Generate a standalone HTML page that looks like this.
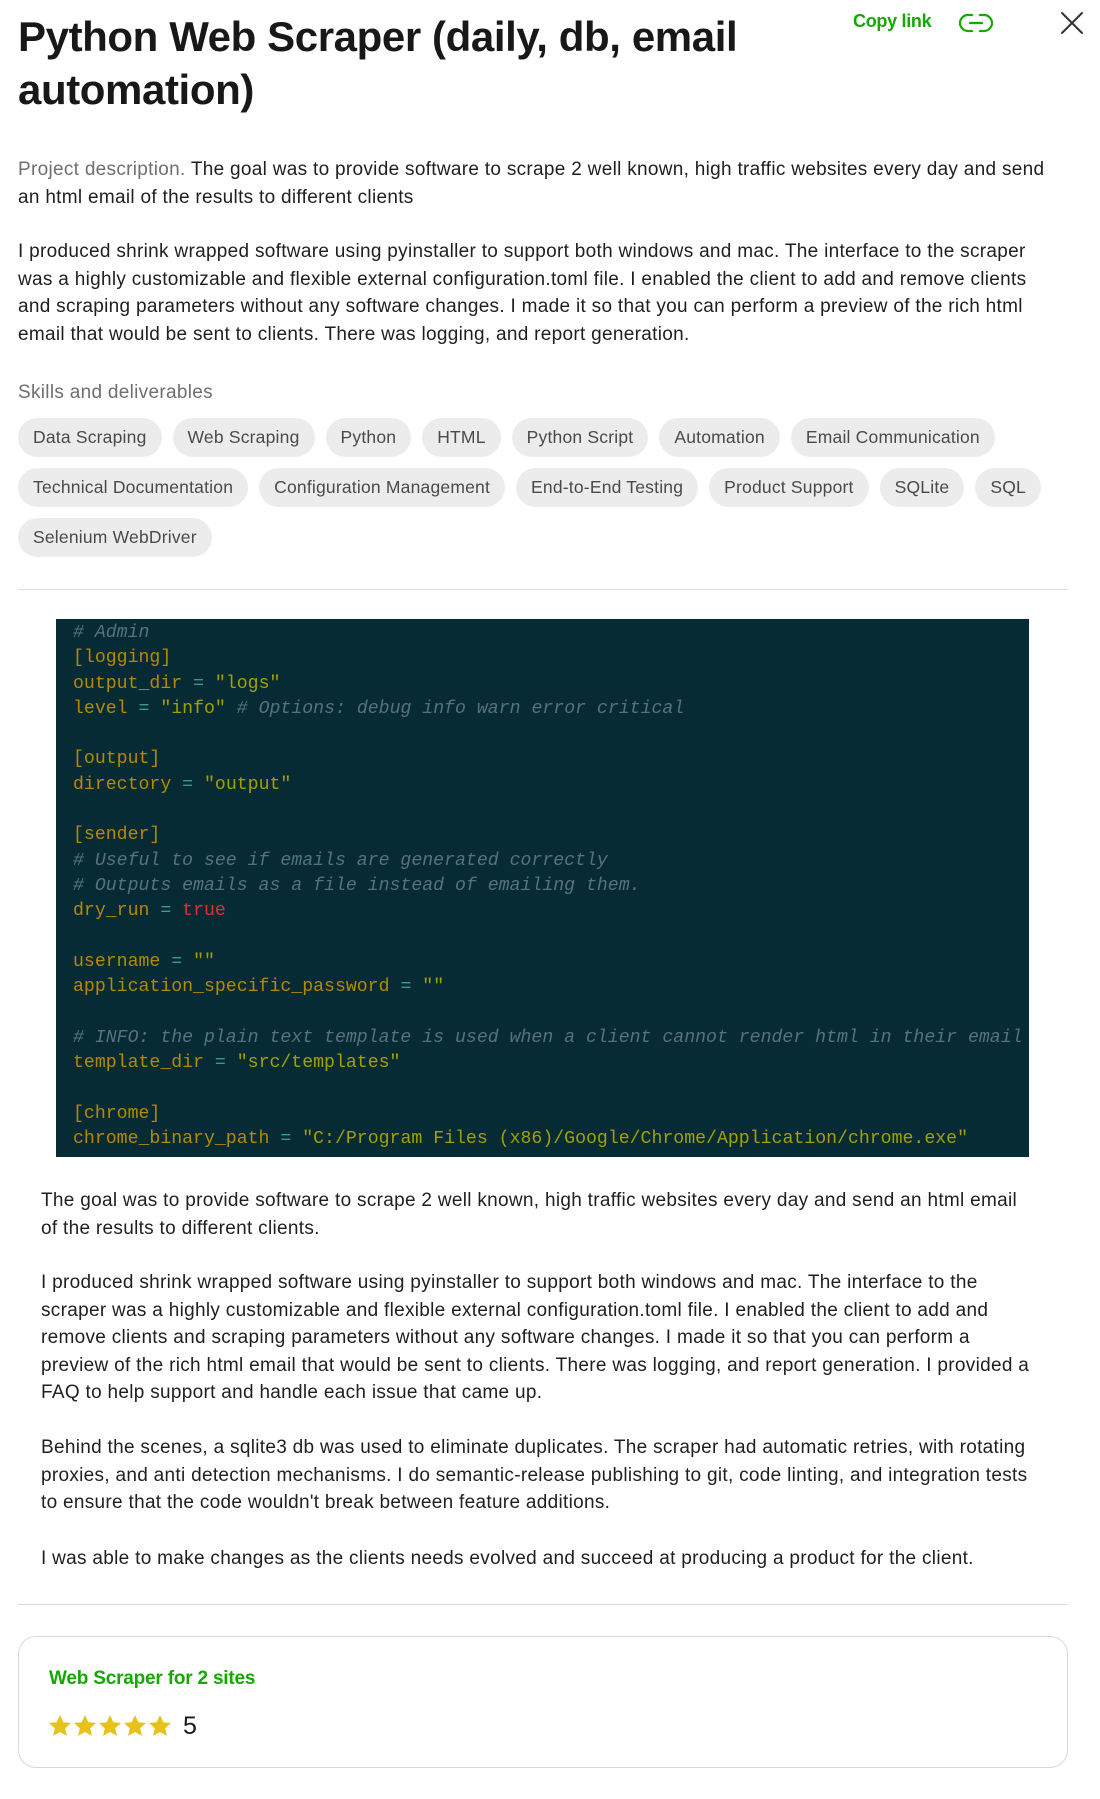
<!DOCTYPE html>
<html><head><meta charset="utf-8"><style>
*{margin:0;padding:0;box-sizing:border-box}
body{width:1100px;height:1799px;background:#fff;font-family:"Liberation Sans",sans-serif;color:#1a1a1a;position:relative;overflow:hidden}
.abs{position:absolute}
h1{position:absolute;left:18px;top:10px;width:800px;font-size:42px;line-height:53px;font-weight:bold;letter-spacing:-0.4px;color:#181818}
.p{position:absolute;font-size:19px;line-height:27.5px;letter-spacing:0.3px;color:#1f1f1f}
.grey{color:#6f6f6f}
.chips{position:absolute;left:18px;top:418px;width:1060px;display:flex;flex-wrap:wrap;gap:11px 11px}
.chip{height:39px;line-height:39px;padding:0 15px;border-radius:20px;background:#ececec;font-size:17.5px;color:#4a4a4a;letter-spacing:0.2px}
.hr{position:absolute;left:18px;width:1050px;height:1px;background:#dcdcdc}
.code{position:absolute;left:56px;top:619px;width:973px;height:538px;background:#062b35;padding:2px 0 0 17px;font-family:"Liberation Mono",monospace;font-size:18.2px;line-height:25.3px;white-space:pre;color:#b58900;overflow:hidden}
.c{color:#58727a;font-style:italic}.s{color:#a3a000}.e{color:#3b9a8a}.r{color:#dc322f}
</style></head><body>
<h1>Python Web Scraper (daily, db, email automation)</h1>
<div class="abs" style="left:853px;top:11px;font-size:18px;color:#14a800;font-weight:bold;letter-spacing:-0.3px">Copy link</div>
<svg class="abs" style="left:959px;top:11px" width="34" height="24" viewBox="0 0 34 24" fill="none" stroke="#14a800" stroke-width="2.2" stroke-linecap="round"><path d="M13 4H9a8 8 0 0 0 0 16h4M21 4h4a8 8 0 0 1 0 16h-4M11 12h12"/></svg>
<svg class="abs" style="left:1060px;top:11px" width="24" height="24" viewBox="0 0 24 24" stroke="#333" stroke-width="2" stroke-linecap="round"><path d="M2 2L22 22M22 2L2 22"/></svg>

<div class="p" style="left:18px;top:156px;width:1050px"><span class="grey">Project description.</span> The goal was to provide software to scrape 2 well known, high traffic websites every day and send an html email of the results to different clients</div>
<div class="p" style="left:18px;top:238px;width:1045px">I produced shrink wrapped software using pyinstaller to support both windows and mac. The interface to the scraper was a highly customizable and flexible external configuration.toml file. I enabled the client to add and remove clients and scraping parameters without any software changes. I made it so that you can perform a preview of the rich html email that would be sent to clients. There was logging, and report generation.</div>
<div class="p grey" style="left:18px;top:379px">Skills and deliverables</div>
<div class="chips">
<span class="chip">Data Scraping</span><span class="chip">Web Scraping</span><span class="chip">Python</span><span class="chip">HTML</span><span class="chip">Python Script</span><span class="chip">Automation</span><span class="chip">Email Communication</span>
<span class="chip">Technical Documentation</span><span class="chip">Configuration Management</span><span class="chip">End-to-End Testing</span><span class="chip">Product Support</span><span class="chip">SQLite</span><span class="chip">SQL</span>
<span class="chip">Selenium WebDriver</span>
</div>
<div class="hr" style="top:589px"></div>

<div class="code"><span class="c"># Admin</span>
[logging]
output_dir <span class="e">=</span> <span class="s">"logs"</span>
level <span class="e">=</span> <span class="s">"info"</span> <span class="c"># Options: debug info warn error critical</span>

[output]
directory <span class="e">=</span> <span class="s">"output"</span>

[sender]
<span class="c"># Useful to see if emails are generated correctly</span>
<span class="c"># Outputs emails as a file instead of emailing them.</span>
dry_run <span class="e">=</span> <span class="r">true</span>

username <span class="e">=</span> <span class="s">""</span>
application_specific_password <span class="e">=</span> <span class="s">""</span>

<span class="c"># INFO: the plain text template is used when a client cannot render html in their email</span>
template_dir <span class="e">=</span> <span class="s">"src/templates"</span>

[chrome]
chrome_binary_path <span class="e">=</span> <span class="s">"C:/Program Files (x86)/Google/Chrome/Application/chrome.exe"</span></div>

<div class="p" style="left:41px;top:1187px;width:995px">The goal was to provide software to scrape 2 well known, high traffic websites every day and send an html email of the results to different clients.</div>
<div class="p" style="left:41px;top:1269px;width:1000px">I produced shrink wrapped software using pyinstaller to support both windows and mac. The interface to the scraper was a highly customizable and flexible external configuration.toml file. I enabled the client to add and remove clients and scraping parameters without any software changes. I made it so that you can perform a preview of the rich html email that would be sent to clients. There was logging, and report generation. I provided a FAQ to help support and handle each issue that came up.</div>
<div class="p" style="left:41px;top:1434px;width:1005px">Behind the scenes, a sqlite3 db was used to eliminate duplicates. The scraper had automatic retries, with rotating proxies, and anti detection mechanisms. I do semantic-release publishing to git, code linting, and integration tests to ensure that the code wouldn't break between feature additions.</div>
<div class="p" style="left:41px;top:1545px;width:1010px">I was able to make changes as the clients needs evolved and succeed at producing a product for the client.</div>
<div class="hr" style="top:1604px"></div>

<div class="abs" style="left:18px;top:1636px;width:1050px;height:132px;border:1.5px solid #d9d9d9;border-radius:18px"></div>
<div class="abs" style="left:49px;top:1668px;font-size:19px;color:#14a800;font-weight:bold;letter-spacing:-0.2px">Web Scraper for 2 sites</div>
<svg class="abs" style="left:48px;top:1714px" width="125" height="26" viewBox="0 0 125 26" fill="#e6c21a"><defs><path id="st" d="M12 1l3.3 7.2 7.7.8-5.8 5.2 1.7 7.7L12 18l-6.9 3.9 1.7-7.7L1 9l7.7-.8z"/></defs><use href="#st"/><use href="#st" x="25"/><use href="#st" x="50"/><use href="#st" x="75"/><use href="#st" x="100"/></svg>
<div class="abs" style="left:183px;top:1712px;font-size:25px;color:#1a1a1a;line-height:28px">5</div>
</body></html>
